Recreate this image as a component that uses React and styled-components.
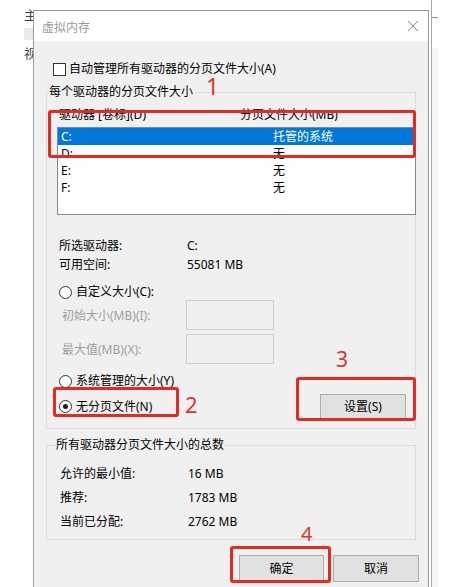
import React from 'react';
import styled, { createGlobalStyle } from 'styled-components';

const drives = [
  { letter: 'C:', size: '托管的系统', selected: true },
  { letter: 'D:', size: '无' },
  { letter: 'E:', size: '无' },
  { letter: 'F:', size: '无' }
];

const totals = [
  { label: '允许的最小值:', value: '16 MB' },
  { label: '推荐:', value: '1783 MB' },
  { label: '当前已分配:', value: '2762 MB' }
];

const marks = [
  { x: 48, y: 110, w: 368, h: 48 },
  { x: 53, y: 387, w: 126, h: 30 },
  { x: 296, y: 377, w: 120, h: 44 },
  { x: 230, y: 546, w: 101, h: 37 }
];

const numbers = [
  { n: '1', x: 206, y: 78, size: 23 },
  { n: '2', x: 185, y: 396, size: 22 },
  { n: '3', x: 336, y: 352, size: 21 },
  { n: '4', x: 301, y: 526, size: 20 }
];

const App = () => (
  <Desktop>
    <GlobalStyle />
    <BackWindow>
      <BackGlyph $top={6}>主</BackGlyph>
      <BackBand />
      <BackGlyph $top={44}>视</BackGlyph>
      <BackTick />
      <BackStrip />
    </BackWindow>

    <Dialog>
      <TitleBar>
        <Title>虚拟内存</Title>
        <CloseIcon width="12" height="12" viewBox="0 0 12 12">
          <path d="M1 1 L11 11 M11 1 L1 11" stroke="#8a8a8a" strokeWidth="1" fill="none" />
        </CloseIcon>
      </TitleBar>

      <Body>
        <CheckRow>
          <CheckBox />
          <CheckLabel>自动管理所有驱动器的分页文件大小(A)</CheckLabel>
        </CheckRow>

        <Group $gap={7}>
          <Legend $indent={1}>每个驱动器的分页文件大小</Legend>
          <GroupBody>
            <ColumnHeader>
              <span>驱动器 [卷标](D)</span>
              <span>分页文件大小(MB)</span>
            </ColumnHeader>
            <ListBox>
              {drives.map(d => (
                <ListRow key={d.letter} $selected={d.selected}>
                  <span>{d.letter}</span>
                  <span>{d.size}</span>
                </ListRow>
              ))}
            </ListBox>

            <InfoGrid>
              <span>所选驱动器:</span>
              <span>C:</span>
              <span>可用空间:</span>
              <span>55081 MB</span>
            </InfoGrid>

            <RadioRow $top={10}>
              <Radio />
              <span>自定义大小(C):</span>
            </RadioRow>

            <SizeGrid>
              <Muted>初始大小(MB)(I):</Muted>
              <SizeInput />
              <Muted>最大值(MB)(X):</Muted>
              <SizeInput />
            </SizeGrid>

            <RadioRow $top={9}>
              <Radio />
              <span>系统管理的大小(Y)</span>
            </RadioRow>

            <BottomRow>
              <RadioRow>
                <Radio $checked />
                <span>无分页文件(N)</span>
              </RadioRow>
              <Button $width={86} $height={26} $right={9}>设置(S)</Button>
            </BottomRow>
          </GroupBody>
        </Group>

        <Group $gap={8}>
          <Legend $indent={8}>所有驱动器分页文件大小的总数</Legend>
          <TotalsGrid>
            {totals.map(t => (
              <React.Fragment key={t.label}>
                <span>{t.label}</span>
                <span>{t.value}</span>
              </React.Fragment>
            ))}
          </TotalsGrid>
        </Group>

        <ButtonRow>
          <Button $width={85} $height={27}>确定</Button>
          <Button $width={86} $height={27}>取消</Button>
        </ButtonRow>
      </Body>
    </Dialog>

    {marks.map((m, i) => (
      <Mark key={i} $x={m.x} $y={m.y} $w={m.w} $h={m.h} />
    ))}
    {numbers.map(n => (
      <StepNumber key={n.n} $x={n.x} $y={n.y} $size={n.size}>{n.n}</StepNumber>
    ))}
  </Desktop>
);

export default App;

const GlobalStyle = createGlobalStyle`
  html, body {
    margin: 0;
    padding: 0;
    background: #ffffff;
  }
  body {
    font-family: "Noto Sans", "Noto Sans CJK SC", sans-serif;
    font-size: 12px;
    color: #000000;
  }
  * {
    box-sizing: border-box;
  }
`;

const Desktop = styled.div`
  position: relative;
  width: 464px;
  height: 587px;
  overflow: hidden;
  padding: 10px 0 0 33px;
  background: #ffffff;
`;

const BackWindow = styled.div`
  position: absolute;
  left: 0;
  top: 0;
  width: 432px;
  height: 587px;
  border-right: 1px solid #a8a8a8;
`;

const BackGlyph = styled.div`
  position: absolute;
  left: 24px;
  top: ${p => p.$top}px;
  font-family: "Noto Sans CJK SC", sans-serif;
  font-size: 13px;
  line-height: 18px;
  color: #444;
`;

const BackBand = styled.div`
  position: absolute;
  left: 24px;
  top: 28px;
  width: 12px;
  height: 12px;
  background: #ebebeb;
`;

const BackTick = styled.div`
  position: absolute;
  left: 432px;
  top: 17px;
  width: 6px;
  height: 1px;
  background: #8c8c8c;
`;

const BackStrip = styled.div`
  position: absolute;
  left: 432px;
  top: 48px;
  width: 6px;
  height: 540px;
  background: #f5f5f5;
`;

const Dialog = styled.div`
  position: relative;
  z-index: 1;
  width: 396px;
  height: 600px;
  border: 1px solid #9c9c9c;
  background: #f0f0f0;
`;

const TitleBar = styled.div`
  height: 30px;
  background: #ffffff;
  display: flex;
  align-items: center;
  justify-content: space-between;
  padding: 0 9px 0 8px;
`;

const Title = styled.span`
  font-family: "Noto Sans CJK SC", sans-serif;
  font-size: 12px;
  line-height: 16px;
  color: #9a9a9a;
  margin-top: 1px;
`;

const CloseIcon = styled.svg`
  display: block;
`;

const Body = styled.div`
  padding: 20px 12px 0 12px;
  display: flex;
  flex-direction: column;
`;

const CheckRow = styled.div`
  display: flex;
  align-items: center;
  gap: 3px;
  height: 16px;
  line-height: 16px;
  margin-left: 7px;
`;

const CheckLabel = styled.div`
  height: 16px;
  line-height: 16px;
`;

const CheckBox = styled.span`
  width: 13px;
  height: 13px;
  border: 1px solid #333333;
  background: #ffffff;
`;

const Group = styled.fieldset`
  margin: ${p => p.$gap}px 0 0 0;
  padding: 0;
  border: 1px solid #dcdcdc;
  min-width: 0;
`;

const Legend = styled.legend`
  margin-left: ${p => p.$indent}px;
  padding: 0 1px;
  line-height: 16px;
`;

const GroupBody = styled.div`
  padding: 0 0 8px 10px;
`;

const ColumnHeader = styled.div`
  display: grid;
  grid-template-columns: 181px 1fr;
  height: 16px;
  line-height: 16px;
  margin-top: 7px;
  padding-left: 2px;
`;

const ListBox = styled.div`
  margin-top: 4px;
  margin-right: -1px;
  height: 88px;
  border: 1px solid #828790;
  background: #ffffff;
`;

const ListRow = styled.div`
  display: grid;
  grid-template-columns: 212px 1fr;
  height: 17px;
  line-height: 17px;
  padding-left: 3px;
  background: ${p => (p.$selected ? '#0078d7' : 'transparent')};
  color: ${p => (p.$selected ? '#ffffff' : '#000000')};
`;

const InfoGrid = styled.div`
  display: grid;
  grid-template-columns: 128px 1fr;
  grid-auto-rows: 19px;
  line-height: 19px;
  margin-top: 21px;
  padding-left: 2px;
`;

const RadioRow = styled.div`
  display: flex;
  align-items: center;
  gap: 4px;
  height: 16px;
  line-height: 16px;
  margin-top: ${p => p.$top || 0}px;
  padding-left: 2px;
`;

const Radio = styled.span`
  position: relative;
  width: 13px;
  height: 13px;
  border: 1px solid #333333;
  border-radius: 50%;
  background: #ffffff;

  &::after {
    content: '';
    display: ${p => (p.$checked ? 'block' : 'none')};
    position: absolute;
    left: 3px;
    top: 3px;
    width: 5px;
    height: 5px;
    border-radius: 50%;
    background: #1a1a1a;
  }
`;

const SizeGrid = styled.div`
  display: grid;
  grid-template-columns: 124px 88px;
  grid-auto-rows: 30px;
  row-gap: 4px;
  align-items: center;
  padding-left: 5px;
`;

const Muted = styled.span`
  color: #a0a0a0;
  line-height: 16px;
  margin-top: 2px;
`;

const SizeInput = styled.div`
  width: 88px;
  height: 30px;
  border: 1px solid #cdcdcd;
  background: #f0f0f0;
`;

const BottomRow = styled.div`
  display: flex;
  align-items: center;
  justify-content: space-between;
  height: 27px;
  margin-top: 4px;
`;

const Button = styled.div`
  width: ${p => p.$width}px;
  height: ${p => p.$height}px;
  margin-right: ${p => p.$right || 0}px;
  display: flex;
  align-items: center;
  justify-content: center;
  border: 1px solid #adadad;
  background: #e1e1e1;
  line-height: 16px;
`;

const TotalsGrid = styled.div`
  display: grid;
  grid-template-columns: 128px 1fr;
  grid-auto-rows: 24px;
  line-height: 24px;
  margin-top: 9px;
  padding: 0 0 5px 13px;
`;

const ButtonRow = styled.div`
  display: flex;
  justify-content: flex-end;
  gap: 9px;
  margin-top: 15px;
  margin-right: -3px;
`;

const Mark = styled.div`
  position: absolute;
  z-index: 5;
  left: ${p => p.$x}px;
  top: ${p => p.$y}px;
  width: ${p => p.$w}px;
  height: ${p => p.$h}px;
  border: 3px solid #e52a23;
  border-radius: 3px;
`;

const StepNumber = styled.div`
  position: absolute;
  z-index: 5;
  left: ${p => p.$x}px;
  top: ${p => p.$y}px;
  font-family: "Noto Sans", sans-serif;
  font-size: ${p => p.$size}px;
  line-height: 0.75;
  height: ${p => Math.round(p.$size * 0.75)}px;
  color: #e0342b;
`;
